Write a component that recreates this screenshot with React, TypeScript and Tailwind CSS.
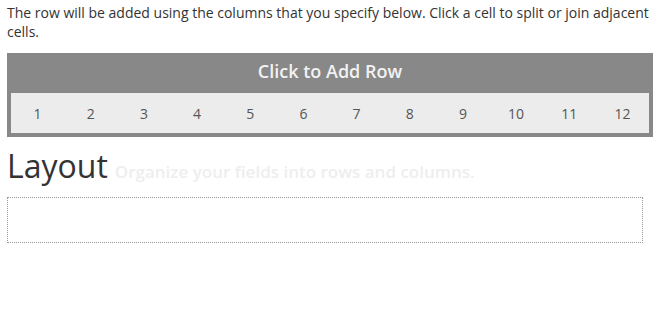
const columns = [1, 2, 3, 4, 5, 6, 7, 8, 9, 10, 11, 12];

export default function App() {
  return (
    <div className="min-h-[312px] w-[656px] bg-white pl-[7px] font-['Open_Sans',sans-serif] text-[#333]">
      <p className="w-[648px] pt-[3px] text-[14px] leading-[19px]">
        The row will be added using the columns that you specify below. Click a cell to split or join adjacent cells.
      </p>

      <div className="mt-[12px] w-[646px] bg-[#888888] px-[4px] pb-[4px]">
        <div className="flex h-[40px] items-center justify-center pb-[3px] text-[18px] font-semibold text-[#f2f2f2]">
          Click to Add Row
        </div>
        <div className="grid h-[40px] grid-cols-12 bg-[#ececec]">
          {columns.map((n) => (
            <div key={n} className="flex items-center justify-center text-[14px] text-[#555]">
              {n}
            </div>
          ))}
        </div>
      </div>

      <div className="mt-[9px] flex items-baseline gap-[7px]">
        <h2 className="text-[32px] leading-[40px] font-normal text-[#333]">Layout</h2>
        <span className="text-[17px] font-semibold text-[#eeeeee]">Organize your fields into rows and columns.</span>
      </div>

      <div className="mt-[11px] h-[46px] w-[636px] border border-dotted border-[#999]"></div>
    </div>
  );
}
